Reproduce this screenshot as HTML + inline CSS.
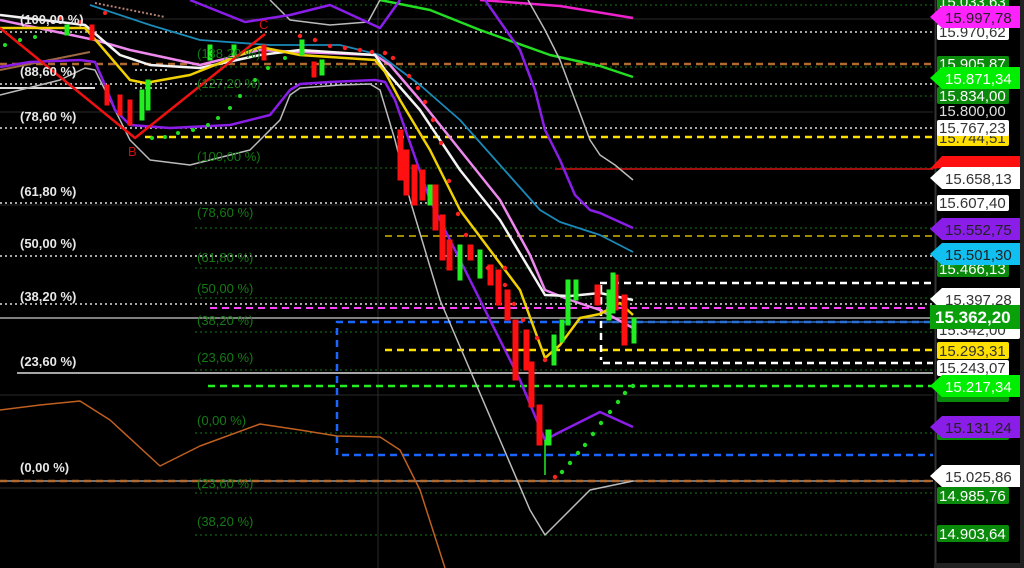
<!DOCTYPE html>
<html><head><meta charset="utf-8"><style>
html,body{margin:0;padding:0;background:#000;width:1024px;height:568px;overflow:hidden}
svg{display:block}
text{font-family:"Liberation Sans",sans-serif}
.l{fill:#e8e8e8;font-size:13px;font-weight:bold}
.g{fill:#147a14;font-size:13px}
.ax{font-size:15px}
</style></head><body>
<svg width="1024" height="568" viewBox="0 0 1024 568" xmlns="http://www.w3.org/2000/svg">
<rect width="1024" height="568" fill="#000"/>
<g stroke="#2a2a2a" stroke-width="1">
<line x1="0" y1="19" x2="933" y2="19"/><line x1="0" y1="112" x2="933" y2="112"/><line x1="0" y1="205" x2="933" y2="205"/><line x1="0" y1="395" x2="933" y2="395"/><line x1="0" y1="488" x2="933" y2="488"/>
<line x1="378" y1="0" x2="378" y2="568"/>
</g>
<g stroke="#137a13" stroke-width="1" stroke-dasharray="2,3">
<line x1="195" y1="5" x2="933" y2="5"/><line x1="195" y1="67" x2="933" y2="67"/><line x1="195" y1="96" x2="933" y2="96"/><line x1="195" y1="168" x2="933" y2="168"/><line x1="195" y1="228" x2="933" y2="228"/><line x1="195" y1="268" x2="933" y2="268"/><line x1="195" y1="298" x2="933" y2="298"/><line x1="195" y1="332" x2="933" y2="332"/><line x1="195" y1="370" x2="933" y2="370"/><line x1="195" y1="433" x2="933" y2="433"/><line x1="195" y1="493" x2="933" y2="493"/><line x1="195" y1="535" x2="933" y2="535"/>
</g>
<g stroke="#e0e0e0" stroke-width="1.5" stroke-dasharray="2,3">
<line x1="0" y1="32" x2="933" y2="32"/><line x1="0" y1="84" x2="933" y2="84"/><line x1="0" y1="128" x2="933" y2="128"/><line x1="0" y1="203" x2="933" y2="203"/><line x1="0" y1="256" x2="933" y2="256"/><line x1="0" y1="304" x2="933" y2="304"/>
<line x1="135" y1="70" x2="170" y2="70"/><line x1="135" y1="88" x2="170" y2="88"/>
</g>
<line x1="0" y1="318" x2="933" y2="318" stroke="#aaa" stroke-width="1.5"/>
<line x1="17" y1="373" x2="933" y2="373" stroke="#ddd" stroke-width="1.5"/>
<line x1="0" y1="88" x2="95" y2="88" stroke="#ddd" stroke-width="2"/>
<line x1="0" y1="64" x2="933" y2="64" stroke="#b06a30" stroke-width="2.5" stroke-dasharray="7,5"/>
<line x1="0" y1="481" x2="933" y2="481" stroke="#999" stroke-width="1.5"/>
<line x1="0" y1="481" x2="933" y2="481" stroke="#b06a30" stroke-width="2.5" stroke-dasharray="7,5"/>
<line x1="0" y1="70" x2="90" y2="52" stroke="#a06a40" stroke-width="2"/>
<line x1="95" y1="3" x2="165" y2="17" stroke="#b08070" stroke-width="2" stroke-dasharray="2,2"/>
<line x1="145" y1="137" x2="933" y2="137" stroke="#ffe000" stroke-width="2.5" stroke-dasharray="7,5"/>
<line x1="385" y1="236" x2="933" y2="236" stroke="#d4b800" stroke-width="1.5" stroke-dasharray="7,5"/>
<line x1="385" y1="350" x2="933" y2="350" stroke="#ffe000" stroke-width="2.5" stroke-dasharray="7,5"/>
<line x1="208" y1="386" x2="933" y2="386" stroke="#22ee22" stroke-width="2.5" stroke-dasharray="7,5"/>
<line x1="210" y1="308" x2="933" y2="308" stroke="#ff44ff" stroke-width="2" stroke-dasharray="7,5"/>
<line x1="555" y1="169" x2="933" y2="169" stroke="#a01010" stroke-width="2"/>
<g stroke="#1a66ff" stroke-width="2.5" stroke-dasharray="7,5" fill="none">
<polyline points="337,455 337,322 933,322"/><line x1="342" y1="455" x2="933" y2="455"/>
</g>
<line x1="600" y1="322" x2="933" y2="322" stroke="#3070c0" stroke-width="1.5"/>
<g stroke="#fff" stroke-width="2.5" stroke-dasharray="7,5" fill="none">
<line x1="600" y1="283" x2="933" y2="283"/><line x1="603" y1="363" x2="933" y2="363"/><line x1="601" y1="285" x2="601" y2="360"/>
</g>
<g fill="none" stroke-width="2.5" stroke-linejoin="round">
<polyline stroke="#c06020" stroke-width="1.5" points="0,410 40,405 80,401 110,420 160,466 200,446 260,424 300,430 337,436 380,437 400,450 420,490 445,568"/>
<polyline stroke="#22dd22" points="380,0 430,10 480,30 550,55 600,66 633,77"/>
<polyline stroke="#ee22cc" points="480,0 560,6 633,18"/>
<polyline stroke="#bbb" stroke-width="1.5" points="270,0 290,20 330,25 368,22 380,0"/>
<polyline stroke="#bbb" stroke-width="1.5" points="528,0 545,30 560,60 575,100 590,140 600,155 615,165 633,180"/>
<polyline stroke="#bbb" stroke-width="1.5" points="0,95 20,90 60,80 85,68 95,70 115,110 130,140 150,160 190,165 250,150 280,120 290,95 300,88 340,85 370,84 380,90 395,140 410,200 440,300 470,370 500,440 530,510 545,535 560,520 590,490 633,481"/>
<polyline stroke="#8a1ee8" points="190,0 245,22 290,15 330,5 380,28 400,0"/>
<polyline stroke="#8a1ee8" points="485,0 520,50 535,90 545,130 560,160 575,195 590,210 600,213 633,228"/>
<polyline stroke="#8a1ee8" points="0,67 30,62 80,60 95,62 105,85 115,110 130,125 170,128 230,125 270,115 290,90 300,84 330,82 375,80 385,82 395,100 430,200 480,300 520,380 545,440 560,432 580,422 600,412 633,427"/>
<polyline stroke="#1a8ab8" stroke-width="1.8" points="90,5 150,25 200,40 270,45 340,45 380,55 420,85 460,120 500,165 540,210 560,222 600,235 633,252"/>
<polyline stroke="#ee88ee" points="0,20 95,40 130,50 200,65 260,50 300,52 375,55 390,65 420,100 460,150 500,200 530,255 545,290 570,300 600,310 633,328"/>
<polyline stroke="#f4f4f4" points="0,15 85,25 120,55 150,65 200,68 260,55 300,50 375,55 385,70 420,110 460,170 500,220 530,270 545,295 570,296 600,293 633,300"/>
<polyline stroke="#f0d000" points="0,28 85,28 100,45 130,80 145,83 190,75 260,47 300,55 375,60 385,72 400,100 430,150 460,210 490,250 520,290 545,358 560,345 580,318 600,314 620,303 633,315"/>
<polyline stroke="#ee1111" points="0,28 135,138 265,34"/>
</g>
<text x="128" y="156" fill="#d01010" font-size="13">B</text>
<text x="259" y="29" fill="#d01010" font-size="13">C</text>
<g stroke-width="1">
<g fill="#ff1010" stroke="#ff1010">
<rect x="398" y="130" width="5" height="50"/><rect x="404" y="150" width="5" height="45"/><rect x="412" y="165" width="5" height="40"/><rect x="420" y="170" width="5" height="30"/><rect x="433" y="185" width="5" height="45"/><rect x="440" y="215" width="5" height="45"/><rect x="447" y="240" width="5" height="30"/><rect x="468" y="245" width="5" height="15"/><rect x="488" y="265" width="5" height="20"/><rect x="496" y="270" width="5" height="35"/><rect x="505" y="290" width="5" height="30"/><rect x="513" y="320" width="5" height="60"/><rect x="524" y="330" width="5" height="40"/><rect x="529" y="362" width="5" height="45"/><rect x="537" y="405" width="5" height="40"/><rect x="595" y="285" width="5" height="20"/><rect x="613" y="275" width="5" height="35"/><rect x="622" y="295" width="5" height="50"/>
<rect x="105" y="85" width="4" height="20"/><rect x="118" y="95" width="4" height="20"/><rect x="128" y="100" width="4" height="25"/><rect x="262" y="45" width="4" height="15"/><rect x="312" y="62" width="4" height="15"/><rect x="90" y="25" width="4" height="15"/>
</g>
<g fill="#22ee22" stroke="#22ee22">
<rect x="428" y="185" width="4" height="20"/><rect x="458" y="245" width="4" height="35"/><rect x="478" y="250" width="4" height="28"/><rect x="546" y="430" width="5" height="15"/><rect x="552" y="335" width="4" height="30"/><rect x="560" y="320" width="4" height="22"/><rect x="566" y="280" width="4" height="45"/><rect x="574" y="280" width="4" height="20"/><rect x="607" y="290" width="4" height="30"/><rect x="611" y="273" width="4" height="40"/><rect x="632" y="318" width="4" height="25"/>
<rect x="140" y="90" width="4" height="30"/><rect x="146" y="80" width="4" height="30"/><rect x="208" y="45" width="4" height="15"/><rect x="232" y="45" width="4" height="10"/><rect x="300" y="40" width="4" height="15"/><rect x="320" y="60" width="4" height="15"/><rect x="65" y="25" width="4" height="10"/>
</g>
<line x1="545" y1="440" x2="545" y2="475" stroke="#22ee22" stroke-width="1.5"/>
</g>
<g fill="#ff2020">
<circle cx="300" cy="36" r="2.2"/><circle cx="315" cy="40" r="2.2"/><circle cx="330" cy="46" r="2.2"/><circle cx="345" cy="48" r="2.2"/><circle cx="360" cy="50" r="2.2"/><circle cx="372" cy="52" r="2.2"/><circle cx="385" cy="53" r="2.2"/><circle cx="393" cy="58" r="2.2"/><circle cx="409" cy="76" r="2.2"/><circle cx="418" cy="88" r="2.2"/><circle cx="425" cy="102" r="2.2"/><circle cx="433" cy="120" r="2.2"/><circle cx="441" cy="143" r="2.2"/><circle cx="449" cy="181" r="2.2"/><circle cx="458" cy="214" r="2.2"/><circle cx="466" cy="235" r="2.2"/><circle cx="488" cy="268" r="2.2"/><circle cx="505" cy="268" r="2.2"/><circle cx="505" cy="285" r="2.2"/><circle cx="514" cy="304" r="2.2"/><circle cx="523" cy="320" r="2.2"/><circle cx="537" cy="338" r="2.2"/><circle cx="545" cy="360" r="2.2"/><circle cx="555" cy="477" r="2.2"/>
<circle cx="60" cy="18" r="2"/><circle cx="80" cy="22" r="2"/><circle cx="105" cy="13" r="2"/>
</g>
<g fill="#22dd22">
<circle cx="152" cy="138" r="2"/><circle cx="165" cy="137" r="2"/><circle cx="178" cy="133" r="2"/><circle cx="193" cy="130" r="2"/><circle cx="208" cy="125" r="2"/><circle cx="218" cy="118" r="2"/><circle cx="230" cy="108" r="2"/><circle cx="240" cy="96" r="2"/><circle cx="255" cy="80" r="2"/><circle cx="268" cy="68" r="2"/><circle cx="285" cy="58" r="2"/>
<circle cx="562" cy="472" r="2.2"/><circle cx="570" cy="463" r="2.2"/><circle cx="578" cy="453" r="2.2"/><circle cx="585" cy="445" r="2.2"/><circle cx="593" cy="434" r="2.2"/><circle cx="601" cy="423" r="2.2"/><circle cx="610" cy="412" r="2.2"/><circle cx="618" cy="402" r="2.2"/><circle cx="625" cy="393" r="2.2"/><circle cx="633" cy="386" r="2.2"/>
<circle cx="5" cy="45" r="2"/><circle cx="20" cy="40" r="2"/><circle cx="35" cy="37" r="2"/>
</g>
<text class="l" x="20" y="24">(100,00 %)</text>
<text class="l" x="20" y="76">(88,60 %)</text>
<text class="l" x="20" y="121">(78,60 %)</text>
<text class="l" x="20" y="196">(61,80 %)</text>
<text class="l" x="20" y="248">(50,00 %)</text>
<text class="l" x="20" y="301">(38,20 %)</text>
<text class="l" x="20" y="366">(23,60 %)</text>
<text class="l" x="20" y="472">(0,00 %)</text>
<g class="g">
<text x="197" y="58">(138,20 %)</text><text x="197" y="88">(127,20 %)</text><text x="197" y="161">(100,00 %)</text><text x="197" y="217">(78,60 %)</text><text x="197" y="262">(61,80 %)</text><text x="197" y="293">(50,00 %)</text><text x="197" y="325">(38,20 %)</text><text x="197" y="362">(23,60 %)</text><text x="197" y="425">(0,00 %)</text><text x="197" y="488">(23,60 %)</text><text x="197" y="526">(38,20 %)</text>
</g>
<rect x="934" y="0" width="90" height="568" fill="#000"/>
<line x1="935.5" y1="0" x2="935.5" y2="568" stroke="#333" stroke-width="2"/>
<rect x="1020" y="0" width="4" height="568" fill="#222"/>
<rect x="934" y="563" width="90" height="5" fill="#222"/>
<g class="ax">
<rect x="937" y="-6" width="72" height="16" rx="2" fill="#0a8a0a"/><text x="939" y="7" fill="#fff">15.033,63</text>
<rect x="937" y="24" width="72" height="16" rx="2" fill="#fff"/><text x="939" y="37" fill="#333">15.970,62</text>
<polygon points="930,17 942,6 1020,6 1020,28 942,28" fill="#ff22ff"/><text x="945" y="23" fill="#222">15.997,78</text>
<rect x="937" y="56" width="72" height="16" rx="2" fill="#0a8a0a"/><text x="939" y="69" fill="#fff">15.905,87</text>
<rect x="937" y="87" width="72" height="17" rx="2" fill="#0a8a0a"/><text x="939" y="101" fill="#fff">15.834,00</text>
<polygon points="930,78 942,67 1020,67 1020,89 942,89" fill="#00ee00"/><text x="945" y="84" fill="#fff">15.871,34</text>
<text x="939" y="116" fill="#ddd">15.800,00</text>
<rect x="937" y="130" width="72" height="16" rx="2" fill="#ffe000"/><text x="939" y="143" fill="#333">15.744,51</text>
<rect x="937" y="120" width="72" height="16" rx="2" fill="#fff"/><text x="939" y="133" fill="#333">15.767,23</text>
<polygon points="930,169 942,156 1020,156 1020,168 942,168" fill="#ff1010"/>
<polygon points="930,178 942,167 1020,167 1020,189 942,189" fill="#fff"/><text x="945" y="184" fill="#333">15.658,13</text>
<rect x="937" y="195" width="72" height="16" rx="2" fill="#fff"/><text x="939" y="208" fill="#333">15.607,40</text>
<rect x="937" y="261" width="72" height="16" rx="2" fill="#0a8a0a"/><text x="939" y="274" fill="#fff">15.466,13</text>
<polygon points="930,229 942,218 1020,218 1020,240 942,240" fill="#8a1ee8"/><text x="945" y="235" fill="#222">15.552,75</text>
<polygon points="930,254 942,243 1020,243 1020,265 942,265" fill="#10c0f0"/><text x="945" y="260" fill="#222">15.501,30</text>
<polygon points="930,299 942,288 1020,288 1020,310 942,310" fill="#fff"/><text x="945" y="305" fill="#333">15.397,28</text>
<rect x="937" y="322" width="83" height="17" rx="2" fill="#fff"/><text x="939" y="335" fill="#333">15.342,00</text>
<rect x="930" y="305" width="90" height="24" fill="#0aa00a"/><text x="935" y="323" fill="#fff" font-size="17" font-weight="bold">15.362,20</text>
<rect x="937" y="342" width="72" height="17" rx="2" fill="#ffe000"/><text x="939" y="356" fill="#333">15.293,31</text>
<rect x="937" y="360" width="72" height="16" rx="2" fill="#fff"/><text x="939" y="373" fill="#333">15.243,07</text>
<rect x="937" y="386" width="72" height="16" rx="2" fill="#0a8a0a"/>
<polygon points="930,386 942,375 1020,375 1020,397 942,397" fill="#00ee00"/><text x="945" y="392" fill="#fff">15.217,34</text>
<rect x="937" y="430" width="72" height="10" rx="2" fill="#0a8a0a"/>
<polygon points="930,427 942,416 1020,416 1020,438 942,438" fill="#8a1ee8"/><text x="945" y="433" fill="#222">15.131,24</text>
<polygon points="930,476 942,465 1020,465 1020,487 942,487" fill="#fff"/><text x="945" y="482" fill="#333">15.025,86</text>
<rect x="937" y="487" width="72" height="17" rx="2" fill="#0a8a0a"/><text x="939" y="501" fill="#fff">14.985,76</text>
<rect x="937" y="525" width="72" height="17" rx="2" fill="#0a8a0a"/><text x="939" y="539" fill="#fff">14.903,64</text>
</g>
</svg>
</body></html>
